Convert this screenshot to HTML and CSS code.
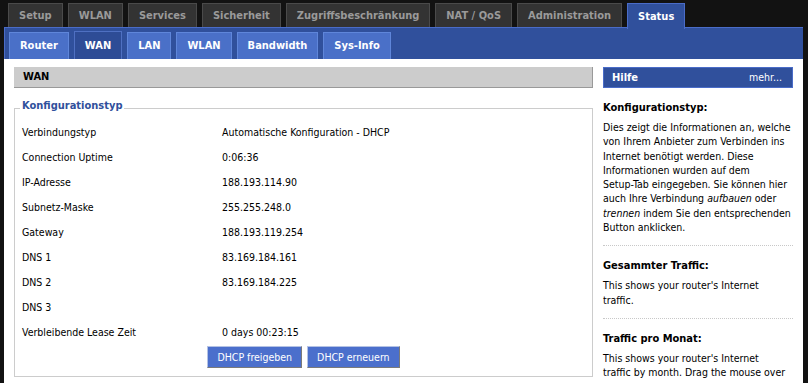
FILE: index.html
```html
<!DOCTYPE html>
<html lang="de">
<head>
    <meta charset="UTF-8">
    <title>Status - WAN</title>
    <link rel="stylesheet" href="styles.css">
</head>
<body>
    <div class="page">

        <!-- Hauptmenü -->
        <nav class="main-tabs">
            <a href="#">Setup</a>
            <a href="#">WLAN</a>
            <a href="#">Services</a>
            <a href="#">Sicherheit</a>
            <a href="#">Zugriffsbeschränkung</a>
            <a href="#">NAT / QoS</a>
            <a href="#">Administration</a>
            <a href="#" class="active">Status</a>
        </nav>

        <!-- Untermenü Status -->
        <nav class="sub-tabs">
            <a href="#">Router</a>
            <a href="#" class="active">WAN</a>
            <a href="#">LAN</a>
            <a href="#">WLAN</a>
            <a href="#">Bandwidth</a>
            <a href="#">Sys-Info</a>
        </nav>

        <div class="content">
            <div class="main">
                <h2 class="section-title">WAN</h2>
                <fieldset>
                    <legend>Konfigurationstyp</legend>
                    <div class="row"><span class="label">Verbindungstyp</span><span>Automatische Konfiguration - DHCP</span></div>
                    <div class="row"><span class="label">Connection Uptime</span><span>0:06:36</span></div>
                    <div class="row"><span class="label">IP-Adresse</span><span>188.193.114.90</span></div>
                    <div class="row"><span class="label">Subnetz-Maske</span><span>255.255.248.0</span></div>
                    <div class="row"><span class="label">Gateway</span><span>188.193.119.254</span></div>
                    <div class="row"><span class="label">DNS 1</span><span>83.169.184.161</span></div>
                    <div class="row"><span class="label">DNS 2</span><span>83.169.184.225</span></div>
                    <div class="row"><span class="label">DNS 3</span><span></span></div>
                    <div class="row"><span class="label">Verbleibende Lease Zeit</span><span>0 days 00:23:15</span></div>
                    <div class="actions">
                        <button type="button">DHCP freigeben</button>
                        <button type="button">DHCP erneuern</button>
                    </div>
                </fieldset>
            </div>

            <!-- Hilfe -->
            <div class="sidebar">
                <div class="help-head">
                    <span>Hilfe</span>
                    <a href="#">mehr...</a>
                </div>
                <div class="help-section">
                    <h3>Konfigurationstyp:</h3>
                    <p>Dies zeigt die Informationen an, welche<br>
                    von Ihrem Anbieter zum Verbinden ins<br>
                    Internet benötigt werden. Diese<br>
                    Informationen wurden auf dem<br>
                    Setup-Tab eingegeben. Sie können hier<br>
                    auch Ihre Verbindung <em>aufbauen</em> oder<br>
                    <em>trennen</em> indem Sie den entsprechenden<br>
                    Button anklicken.</p>
                </div>
                <div class="help-section">
                    <h3>Gesammter Traffic:</h3>
                    <p>This shows your router's Internet<br>
                    traffic.</p>
                </div>
                <div class="help-section">
                    <h3>Traffic pro Monat:</h3>
                    <p>This shows your router's Internet<br>
                    traffic by month. Drag the mouse over<br>
                    graph to see daily data. Data is stored<br>
                    in nvram.</p>
                </div>
            </div>
        </div>

    </div>
</body>
</html>
```

FILE: styles.css
```css
body {
    margin: 0;
    background-color: #121212;
    font-family: "DejaVu Sans Condensed", "Liberation Sans", sans-serif;
    font-size: 10.5px;
    color: #000;
    overflow: hidden;
}
.page {
    margin: 0 5px 0 4px;
}
.main-tabs {
    display: flex;
    align-items: flex-end;
    gap: 5px;
    height: 24px;
    padding: 3px 0 0 4px;
}
.main-tabs a {
    background-color: #333;
    border: 1px solid #4a4a4a;
    border-bottom: none;
    color: #9a9a9a;
    font-weight: bold;
    font-size: 11px;
    line-height: 23px;
    padding: 0 10px;
    text-decoration: none;
}
.main-tabs a.active {
    position: relative;
    background-color: #30509c;
    border-color: #4a6cc8;
    color: #fff;
    line-height: 25px;
    margin-bottom: -2px;
}
.sub-tabs {
    display: flex;
    align-items: flex-end;
    gap: 5px;
    height: 27px;
    padding: 4px 0 0 4px;
    background-color: #30509c;
    border-top: 1px solid #4a6cc8;
    border-left: 1px solid #4a6cc8;
}
.sub-tabs a {
    background-color: #4a70c8;
    border: 1px solid #5f86da;
    border-bottom: none;
    color: #fff;
    font-weight: bold;
    font-size: 11px;
    line-height: 26px;
    padding: 0 10px;
    text-decoration: none;
}
.sub-tabs a.active {
    background-color: #2e4c96;
    border-color: #4f70c2;
    line-height: 27px;
}
.content {
    display: flex;
    gap: 10px;
    padding: 8px 9px 10px 10px;
    background-color: #fff;
}
.main {
    width: 579px;
}
.section-title {
    margin: 0;
    background-color: #ccc;
    border-right: 1px solid #999;
    border-bottom: 1px solid #999;
    font-size: 11px;
    line-height: 20px;
    padding-left: 9px;
}
fieldset {
    margin: 11px 0 0 0;
    padding: 1px 7px 8px;
    border: 1px solid #ccc;
}
legend {
    margin-left: -2px;
    padding: 0 2px 6px;
    color: #30509c;
    font-weight: bold;
    font-size: 11px;
    line-height: 13px;
}
.row {
    display: flex;
    align-items: center;
    height: 25px;
}
.label {
    width: 200px;
}
.actions {
    display: flex;
    justify-content: center;
    gap: 5px;
    margin-top: 2px;
}
button {
    font-family: inherit;
    font-size: 10.5px;
    color: #fff;
    background-color: #4b6fcc;
    border: 1px solid;
    border-color: #b4c2e4 #7a7a7a #7a7a7a #b4c2e4;
    height: 22px;
    padding: 0 9px;
}
.sidebar {
    width: 190px;
}
.help-head {
    display: flex;
    justify-content: space-between;
    background-color: #30509c;
    border: 1px solid #4a6cc8;
    color: #fff;
    line-height: 19px;
    padding: 0 10px 0 8px;
}
.help-head span {
    font-weight: bold;
    font-size: 11px;
}
.help-head a {
    color: #fff;
    text-decoration: none;
}
.help-section {
    padding: 13px 0 11px;
    border-bottom: 1px dotted #c8c8c8;
}
.help-section:first-of-type {
    padding: 10px 0 15px;
}
.help-section h3 {
    margin: 0 0 5px;
    font-size: 11px;
    line-height: 14px;
}
.help-section:first-of-type h3 {
    margin-bottom: 7px;
}
.help-section p {
    margin: 0;
    line-height: 14.3px;
    white-space: nowrap;
}
```
